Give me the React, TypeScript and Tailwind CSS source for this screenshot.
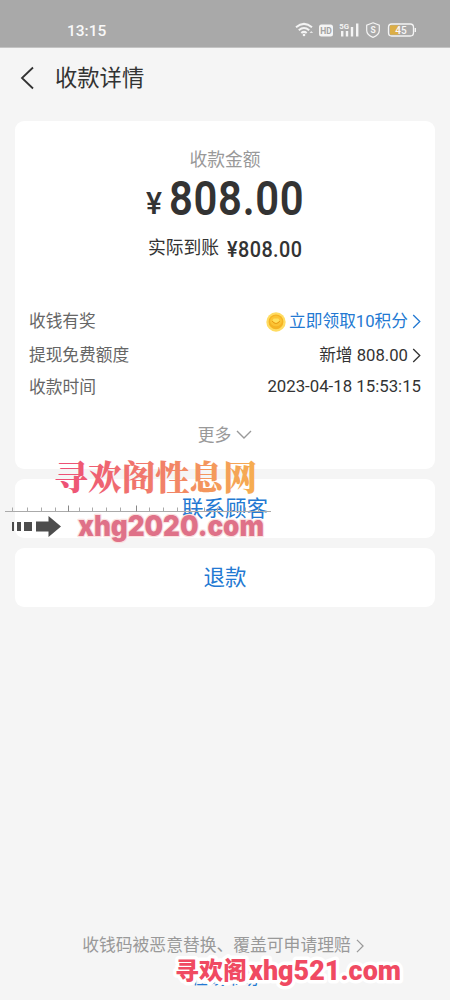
import React from "react";

function Chevron({ className, down = false }: { className: string; down?: boolean }) {
  return (
    <svg
      className={className}
      viewBox={down ? "0 0 16 9" : "0 0 9 16"}
      fill="none"
      stroke="currentColor"
      strokeWidth="1.4"
    >
      <path d={down ? "M1 1l7 7 7-7" : "M1 1l7 7-7 7"} />
    </svg>
  );
}

function StatusIcons() {
  return (
    <svg className="h-[20px] w-[124px]" viewBox="294 20 124 20" fill="none" stroke="#f4f4f4">
      <g strokeWidth="2">
        <path d="M296 27.2q8-6.6 16 0" />
        <path d="M298.8 30.2q5.2-4.4 10.4 0" />
        <path d="M301.3 33q2.7-2.3 5.4 0" />
      </g>
      <circle cx="304" cy="35" r="1.3" fill="#f4f4f4" stroke="none" />
      <path d="M309.5 33l1.8-2 1.8 2z" fill="#e4e4e4" stroke="none" />
      <rect x="319" y="24.5" width="14" height="12" rx="2.5" fill="#f4f4f4" stroke="none" />
      <text x="326" y="34" textAnchor="middle" fontFamily="Roboto, sans-serif" fontSize="8.5" fontWeight="700" fill="#a2a2a2" stroke="none">HD</text>
      <text x="339.3" y="29" fontFamily="Roboto, sans-serif" fontSize="7.8" fontWeight="700" fill="#f4f4f4" stroke="none">5G</text>
      <path d="M342.2 31v5.5M347 31v5.5M352 27v9.5M357.2 23.5v13" strokeWidth="2.4" />
      <path d="M373 22.8l6.3 2.4v5.3q0 4.2-6.3 6.9q-6.3-2.7-6.3-6.9v-5.3z" strokeWidth="1.2" />
      <text x="373" y="33.2" textAnchor="middle" fontFamily="Roboto, sans-serif" fontSize="8.5" fontWeight="700" fill="#f4f4f4" stroke="none">S</text>
      <rect x="388.5" y="24" width="25" height="12" rx="3.2" strokeWidth="1.3" />
      <path d="M390 25.3h9v9.4h-9z" fill="#dcae45" stroke="none" />
      <path d="M415.3 28v4" strokeWidth="1.4" />
      <text x="401" y="34" textAnchor="middle" fontFamily="Roboto, sans-serif" fontSize="10" fontWeight="500" fill="#f8f8f8" stroke="none">45</text>
    </svg>
  );
}

function Coin() {
  return (
    <svg className="mr-[3px] h-[20px] w-[20px]" viewBox="0 0 20 20">
      <circle cx="10" cy="10" r="9.7" fill="#ffdc62" />
      <circle cx="10" cy="9.8" r="7.4" fill="#f5b323" />
      <ellipse cx="10" cy="9" rx="6" ry="5.3" fill="#fbc334" />
      <path d="M6.3 8.6l3.7 3 3.7-3-1.4-2.1H7.7z" fill="#ffe05c" />
      <path d="M6 9q4 5 8 0" stroke="#e99d16" strokeWidth="1" fill="none" />
    </svg>
  );
}

const ticks = [12, 27, 41, 55, 79, 92, 106, 120, 149, 163, 177, 190, 204, 217, 231, 245, 258];

export default function App() {
  return (
    <div className="relative flex h-[1000px] w-[450px] flex-col overflow-hidden bg-[#f5f5f5] font-['Roboto','Noto_Sans_CJK_SC',sans-serif] text-[#333]">
      <div className="flex h-[48px] shrink-0 items-start justify-between border-b border-[#c4c4c4] bg-[#a9a9a9] pr-[32px] pl-[67px]">
        <span className="mt-[21px] text-[15.5px] leading-[20px] font-medium text-[#f8f8f8]">13:15</span>
        <div className="mt-[20px]">
          <StatusIcons />
        </div>
      </div>

      <header className="flex h-[73px] shrink-0 items-start pl-[20px]">
        <svg className="mt-[18px] h-[24px] w-[14px]" viewBox="0 0 14 24" fill="none" stroke="#333" strokeWidth="1.8">
          <path d="M13 1.5L2 12l11 10.5" />
        </svg>
        <h1 className="mt-[14px] ml-[21px] text-[22.3px] leading-[32px] font-normal">收款详情</h1>
      </header>

      <main className="flex flex-col gap-[10px] px-[15px]">
        <section className="flex h-[348px] flex-col rounded-[9px] bg-white px-[14px]">
          <p className="mt-[26px] text-center text-[17.8px] leading-[26px] text-[#999]">收款金额</p>
          <div className="flex h-[52px] pl-[117px]">
            <span className="mt-[5px] w-[23px]">
              <span className="inline-block origin-left scale-x-[0.97] text-[31px] leading-[52px] font-medium">¥</span>
            </span>
            <span className="w-[134px] whitespace-nowrap">
              <span className="inline-block origin-left scale-x-[0.87] text-[48px] leading-[52px] font-semibold tracking-[0.8px]">808.00</span>
            </span>
          </div>
          <div className="flex h-[44px] items-center pl-[119px]">
            <span className="mt-[2px] text-[17.8px] leading-[26px]">实际到账</span>
            <span className="mt-[5px] ml-[8px] inline-block origin-left scale-x-[0.9] text-[22px] leading-[26px] font-medium tracking-[0.5px] whitespace-nowrap">¥808.00</span>
          </div>
          <div className="mt-[36px] flex h-[34px] items-center justify-between text-[16.7px]">
            <span className="text-[#666]">收钱有奖</span>
            <span className="flex items-center text-[#2379d2]">
              <Coin />
              立即领取10积分
              <Chevron className="ml-[4px] h-[15px] w-[9px]" />
            </span>
          </div>
          <div className="flex h-[33px] items-center justify-between text-[16.7px]">
            <span className="mt-px text-[#666]">提现免费额度</span>
            <span className="flex items-center">
              新增 808.00
              <Chevron className="ml-[4px] h-[15px] w-[9px]" />
            </span>
          </div>
          <div className="flex h-[31px] items-center justify-between text-[16.8px]">
            <span className="text-[#666]">收款时间</span>
            <span className="-mt-px">2023-04-18 15:53:15</span>
          </div>
          <div className="mt-[20px] flex h-[26px] items-center justify-center gap-[5px] text-[16.8px] text-[#999]">
            更多
            <Chevron down className="-mt-[3px] h-[9px] w-[16px]" />
          </div>
        </section>
        <button className="flex h-[59px] items-center justify-center rounded-[9px] bg-white pt-[2px] text-[21.5px] text-[#2379d2]">联系顾客</button>
        <button className="flex h-[59px] items-center justify-center rounded-[9px] bg-white pt-[2px] text-[21.5px] text-[#2379d2]">退款</button>
      </main>

      <footer className="mt-auto flex h-[68px] flex-col items-center">
        <div className="mr-[4px] flex h-[28px] items-center gap-[5px] text-[16.8px] text-[#999]">
          收钱码被恶意替换、覆盖可申请理赔
          <Chevron className="h-[14px] w-[8px]" />
        </div>
        <a className="mt-[5px] h-[22px] overflow-hidden text-[16.8px] leading-[26px] text-[#2379d2]">在线帮助</a>
      </footer>

      <svg className="absolute top-[450px] left-0 h-[100px] w-[290px]" viewBox="0 450 290 100">
        <defs>
          <linearGradient id="title" gradientUnits="userSpaceOnUse" x1="55" y1="0" x2="256" y2="0">
            <stop offset="0" stopColor="#ed4c77" />
            <stop offset="0.5" stopColor="#f17d6b" />
            <stop offset="1" stopColor="#f6ae50" />
          </linearGradient>
        </defs>
        <text x="54" y="490" textLength="203" lengthAdjust="spacingAndGlyphs" fontFamily="'Noto Serif CJK SC', 'Noto Sans CJK SC', serif" fontSize="34" fontWeight="900" fill="url(#title)">寻欢阁性息网</text>
        <path d="M5 511.5h266" stroke="#aaa" strokeWidth="1" />
        <path d={ticks.map((x) => `M${x + 0.5} 507.5v4`).join("")} stroke="#aaa" />
        <path d="M68.5 505.5v6M136.5 505.5v6" stroke="#888" />
        <path d="M12 522h2v9h-2zM17 522h4v9h-4zM24 522h8v9h-8zM36 521.5h12.500v-5.500l12.500 10.500-12.500 10.500v-5.500h-12.500z" fill="#4d4d4d" />
        <text x="78" y="536" textLength="186" lengthAdjust="spacingAndGlyphs" fontFamily="Inter, sans-serif" fontSize="28" fontWeight="900" fill="#df7188" stroke="#fae1df" strokeWidth="2.4" strokeLinejoin="round" paintOrder="stroke">xhg2020.com</text>
      </svg>

      <svg className="absolute top-[950px] left-[165px] h-[50px] w-[250px]" viewBox="165 950 250 50">
        <g fill="#f04a62" stroke="#fff" strokeWidth="7" strokeLinejoin="round" paintOrder="stroke" fontWeight="900">
          <text x="175" y="979" textLength="72" lengthAdjust="spacingAndGlyphs" fontFamily="'Noto Sans CJK SC', sans-serif" fontSize="24">寻欢阁</text>
          <text x="249" y="979.5" textLength="152" lengthAdjust="spacingAndGlyphs" fontFamily="Roboto, sans-serif" fontSize="27.5">xhg521.com</text>
        </g>
      </svg>
    </div>
  );
}
